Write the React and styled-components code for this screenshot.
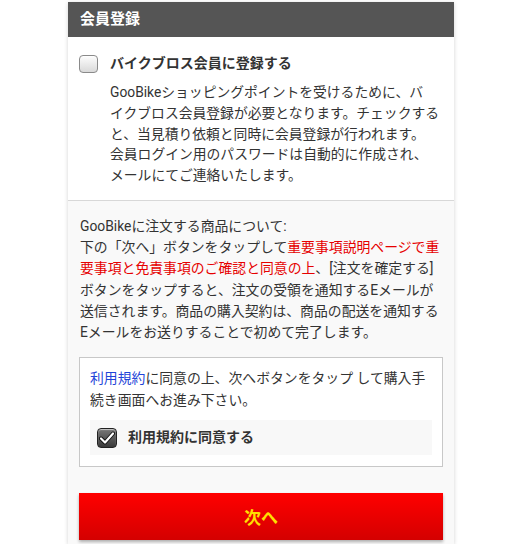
import React from "react";
import styled, { createGlobalStyle } from "styled-components";

const Global = createGlobalStyle`
  html, body { margin: 0; padding: 0; background: #fff; }
  body { font-family: Roboto, "Noto Sans CJK JP", sans-serif; color: #333; }
`;

const Panel = styled.div`
  width: 386px;
  margin: 2px 0 0 68px;
  background: #f9f9f9;
  box-shadow: 0 1px 4px rgba(0, 0, 0, 0.18);
  padding-bottom: 4px;
`;

const Header = styled.div`
  height: 35px;
  line-height: 35px;
  background: #555;
  color: #fff;
  font-size: 15px;
  font-weight: bold;
  padding-left: 12px;
`;

const TopSection = styled.div`
  background: #fff;
  padding: 16px 11px 14px 11px;
  border-bottom: 1px solid #d8d8d8;
`;

const CheckRow = styled.label`
  display: flex;
  align-items: center;
  gap: ${(p) => p.$gap || 12}px;
  font-weight: bold;
  font-size: 14px;
  line-height: 21px;
`;

const Box = styled.span`
  flex: none;
  width: ${(p) => p.$w}px;
  height: ${(p) => p.$h}px;
  border-radius: 4px;
  box-sizing: border-box;
  display: flex;
  align-items: center;
  justify-content: center;
  border: 1px solid ${(p) => (p.$checked ? "#222" : "#8a8a8a")};
  background: ${(p) =>
    p.$checked
      ? "linear-gradient(#777, #3a3a3a)"
      : "linear-gradient(#fdfdfd, #d9d9d9)"};
  box-shadow: inset 0 1px 1px rgba(255, 255, 255, 0.6);
`;

const Desc = styled.p`
  margin: 8px 0 0 31px;
  font-size: 13.8px;
  line-height: 20.8px;
  white-space: nowrap;
`;

const Section = styled.div`
  padding: 15px 11px 0 11px;
`;

const Notice = styled.p`
  margin: 0 0 0 1px;
  font-size: 13.85px;
  line-height: 21.2px;
  white-space: nowrap;
`;

const Red = styled.span`
  color: #e60000;
`;

const Blue = styled.span`
  color: #1f45d8;
`;

const AgreeBox = styled.div`
  margin-top: 14px;
  background: #fff;
  border: 1px solid #c8c8c8;
  padding: 9px 10px 11px 10px;
`;

const AgreeText = styled.p`
  margin: 0;
  font-size: 13.85px;
  line-height: 22px;
  white-space: nowrap;
`;

const AgreeRow = styled.div`
  margin-top: 9px;
  height: 35px;
  background: #f8f8f8;
  padding-left: 7px;
  display: flex;
  align-items: center;
`;

const NextButton = styled.button`
  display: block;
  width: 100%;
  height: 47px;
  margin-top: 26px;
  border: none;
  background: linear-gradient(#ff0000, #d40000);
  box-shadow: 0 2px 3px rgba(0, 0, 0, 0.3);
  color: #ffe000;
  font-family: Roboto, "Noto Sans CJK JP", sans-serif;
  font-size: 17px;
  font-weight: bold;
  cursor: pointer;
`;

const Check = () => (
  <svg width="16" height="14" viewBox="0 0 16 14">
    <path
      d="M2 7.5 L6 11.5 L14 2.5"
      fill="none"
      stroke="#111"
      strokeWidth="4"
      strokeLinecap="round"
      strokeLinejoin="round"
    />
    <path
      d="M2 7.5 L6 11.5 L14 2.5"
      fill="none"
      stroke="#fff"
      strokeWidth="2.2"
      strokeLinecap="round"
      strokeLinejoin="round"
    />
  </svg>
);

export default function App() {
  return (
    <>
      <Global />
      <Panel>
        <Header>会員登録</Header>
        <TopSection>
          <CheckRow>
            <Box $w={19} $h={18} />
            バイクブロス会員に登録する
          </CheckRow>
          <Desc>
            GooBikeショッピングポイントを受けるために、バ
            <br />
            イクブロス会員登録が必要となります。チェックする
            <br />
            と、当見積り依頼と同時に会員登録が行われます。
            <br />
            会員ログイン用のパスワードは自動的に作成され、
            <br />
            メールにてご連絡いたします。
          </Desc>
        </TopSection>
        <Section>
          <Notice>
            GooBikeに注文する商品について:
            <br />
            下の「次へ」ボタンをタップして
            <Red>
              重要事項説明ページで重
              <br />
              要事項と免責事項のご確認と同意の上
            </Red>
            、[注文を確定する]
            <br />
            ボタンをタップすると、注文の受領を通知するEメールが
            <br />
            送信されます。商品の購入契約は、商品の配送を通知する
            <br />
            Eメールをお送りすることで初めて完了します。
          </Notice>
          <AgreeBox>
            <AgreeText>
              <Blue>利用規約</Blue>に同意の上、次へボタンをタップ して購入手
              <br />
              続き画面へお進み下さい。
            </AgreeText>
            <AgreeRow>
              <CheckRow $gap={11}>
                <Box $w={20} $h={20} $checked>
                  <Check />
                </Box>
                利用規約に同意する
              </CheckRow>
            </AgreeRow>
          </AgreeBox>
          <NextButton>次へ</NextButton>
        </Section>
      </Panel>
    </>
  );
}
